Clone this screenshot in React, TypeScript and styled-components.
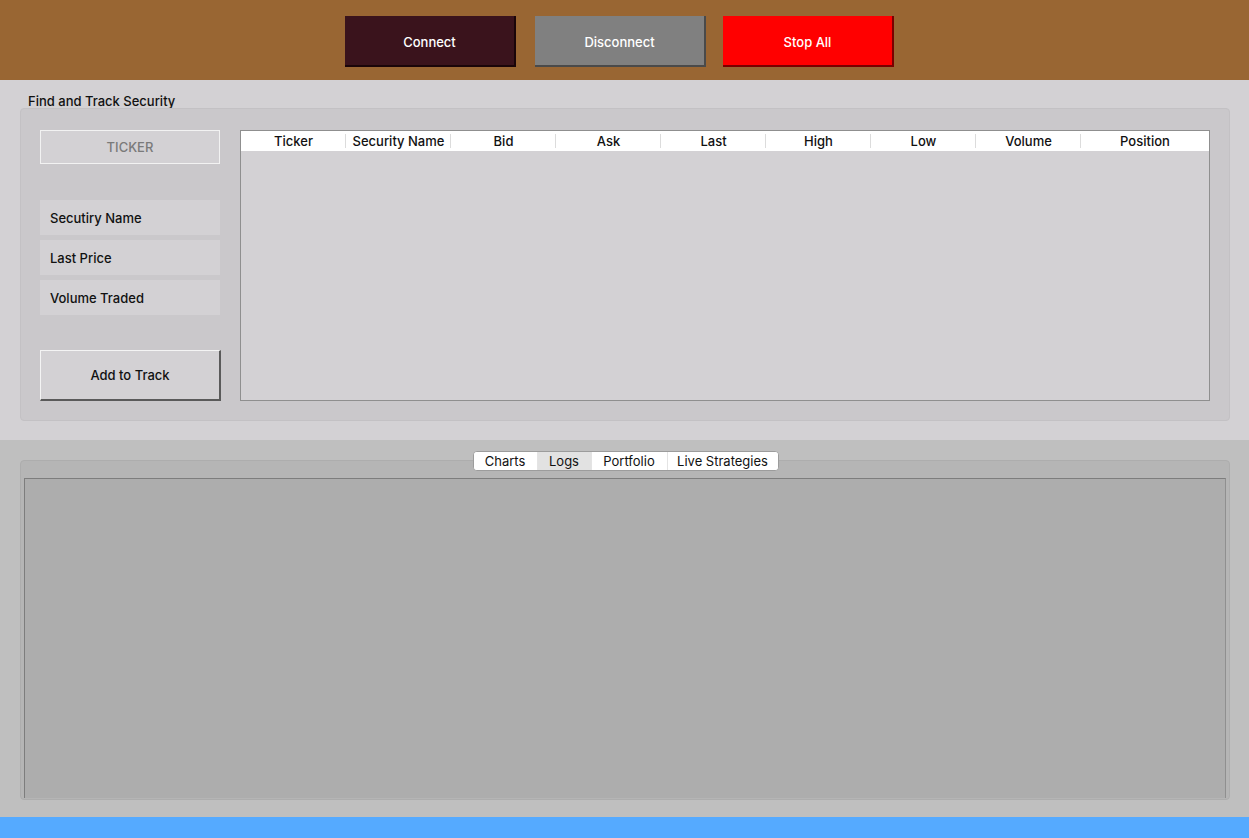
import React from "react";
import styled, { createGlobalStyle } from "styled-components";

const GlobalStyle = createGlobalStyle`
  html, body {
    margin: 0;
    padding: 0;
    background: #bfbfbf;
  }
  body {
    font-family: Inter, "Noto Sans", "Liberation Sans", sans-serif;
    font-size: 13px;
    color: #111;
  }
`;

const columns = [
  "Ticker",
  "Security Name",
  "Bid",
  "Ask",
  "Last",
  "High",
  "Low",
  "Volume",
  "Position",
];

const tabs = ["Charts", "Logs", "Portfolio", "Live Strategies"];
const tabWidths = [63, 54, 76, 111];

const Window = styled.div`
  width: 1249px;
  height: 838px;
  display: flex;
  flex-direction: column;
  overflow: hidden;
`;

const TopBar = styled.div`
  height: 80px;
  flex-shrink: 0;
  background: #996633;
  display: flex;
  align-items: flex-start;
  padding: 16px 0 0 345px;
  box-sizing: border-box;
`;

const ActionButton = styled.button<{ $bg: string; $shade: string; $gap?: number }>`
  width: 171px;
  height: 51px;
  margin-right: ${(p) => p.$gap ?? 0}px;
  background: ${(p) => p.$bg};
  color: #fff;
  border: none;
  border-right: 2px solid ${(p) => p.$shade};
  border-bottom: 2px solid ${(p) => p.$shade};
  font-family: inherit;
  font-size: 13px;
  font-weight: 500;
  padding: 2px 0 0 0;
  cursor: pointer;
`;

const TrackSection = styled.section`
  height: 360px;
  flex-shrink: 0;
  background: #d3d1d4;
  padding: 14px 19px 20px 20px;
  box-sizing: border-box;
  display: flex;
  flex-direction: column;
`;

const GroupTitle = styled.div`
  font-size: 13px;
  font-weight: 500;
  line-height: 14px;
  padding-left: 8px;
`;

const GroupBox = styled.div`
  flex: 1;
  background: #cac8cb;
  border: 1px solid #c3c1c4;
  border-radius: 4px;
  padding: 21px 19px 19px 19px;
  display: flex;
  gap: 20px;
`;

const LeftColumn = styled.div`
  width: 180px;
  flex-shrink: 0;
  display: flex;
  flex-direction: column;
`;

const TickerInput = styled.div`
  height: 34px;
  box-sizing: border-box;
  border: 1px solid #f2f2f2;
  background: #d3d1d4;
  color: #7a7a7a;
  font-weight: 500;
  display: flex;
  align-items: center;
  justify-content: center;
  margin-bottom: 36px;
`;

const InfoLabel = styled.div`
  height: 35px;
  background: #d3d1d4;
  padding-left: 10px;
  display: flex;
  align-items: center;
  font-weight: 500;
  margin-bottom: 5px;
`;

const AddButton = styled.button`
  margin-top: 30px;
  height: 51px;
  width: 181px;
  background: #d3d1d4;
  border: none;
  border-top: 1px solid #f4f4f4;
  border-left: 1px solid #f4f4f4;
  border-right: 2px solid #5a5a5a;
  border-bottom: 2px solid #5a5a5a;
  font-family: inherit;
  font-size: 13px;
  font-weight: 500;
  color: #111;
  padding: 0;
`;

const Table = styled.div`
  flex: 1;
  border: 1px solid #8f8f8f;
  background: #d3d1d4;
  display: flex;
  flex-direction: column;
`;

const HeaderRow = styled.div`
  height: 20px;
  background: #fff;
  display: grid;
  grid-template-columns: repeat(8, 105px) 1fr;
`;

const HeaderCell = styled.div<{ $last?: boolean }>`
  display: flex;
  align-items: center;
  justify-content: center;
  font-weight: 500;
  position: relative;
  &::after {
    content: "";
    display: ${(p) => (p.$last ? "none" : "block")};
    position: absolute;
    right: 0;
    top: 3px;
    bottom: 3px;
    width: 1px;
    background: #dcdcdc;
  }
`;

const TabSection = styled.section`
  flex: 1;
  background: #bfbfbf;
  padding: 11px 19px 17px 20px;
  box-sizing: border-box;
  display: flex;
  flex-direction: column;
`;

const TabBar = styled.div`
  align-self: center;
  position: relative;
  z-index: 1;
  display: flex;
  height: 20px;
  box-sizing: border-box;
  background: #fff;
  border: 1px solid #9c9c9c;
  border-radius: 4px;
  overflow: hidden;
  margin-left: 1px;
`;

const Tab = styled.div<{ $active?: boolean; $w: number }>`
  width: ${(p) => p.$w}px;
  box-sizing: border-box;
  display: flex;
  align-items: center;
  justify-content: center;
  background: ${(p) => (p.$active ? "#e2e2e2" : "#fff")};
  border-left: 1px solid #e4e4e4;
  &:first-child {
    border-left: none;
  }
  font-size: 13px;
  line-height: 1;
`;

const TabFrame = styled.div`
  flex: 1;
  margin-top: -11px;
  background: #b5b5b5;
  border: 1px solid #adadad;
  border-radius: 4px;
  padding: 17px 3px 1px 3px;
  display: flex;
`;

const TabPane = styled.div`
  flex: 1;
  background: #adadad;
  border-top: 1px solid #7d7d7d;
  border-left: 1px solid #7d7d7d;
  border-right: 1px solid #8f8f8f;
`;

const StatusBar = styled.div`
  height: 21px;
  flex-shrink: 0;
  background: #55aaff;
`;

export default function App() {
  return (
    <Window>
      <GlobalStyle />
      <TopBar>
        <ActionButton $bg="#3a131c" $shade="#1a0509" $gap={19}>
          Connect
        </ActionButton>
        <ActionButton $bg="#808080" $shade="#4a4a4a" $gap={17}>
          Disconnect
        </ActionButton>
        <ActionButton $bg="#ff0000" $shade="#7a0000">
          Stop All
        </ActionButton>
      </TopBar>

      <TrackSection>
        <GroupTitle>Find and Track Security</GroupTitle>
        <GroupBox>
          <LeftColumn>
            <TickerInput>TICKER</TickerInput>
            <InfoLabel>Secutiry Name</InfoLabel>
            <InfoLabel>Last Price</InfoLabel>
            <InfoLabel>Volume Traded</InfoLabel>
            <AddButton>Add to Track</AddButton>
          </LeftColumn>
          <Table>
            <HeaderRow>
              {columns.map((c, i) => (
                <HeaderCell key={c} $last={i === columns.length - 1}>
                  {c}
                </HeaderCell>
              ))}
            </HeaderRow>
          </Table>
        </GroupBox>
      </TrackSection>

      <TabSection>
        <TabBar>
          {tabs.map((t, i) => (
            <Tab key={t} $w={tabWidths[i]} $active={t === "Logs"}>
              {t}
            </Tab>
          ))}
        </TabBar>
        <TabFrame>
          <TabPane />
        </TabFrame>
      </TabSection>

      <StatusBar />
    </Window>
  );
}
